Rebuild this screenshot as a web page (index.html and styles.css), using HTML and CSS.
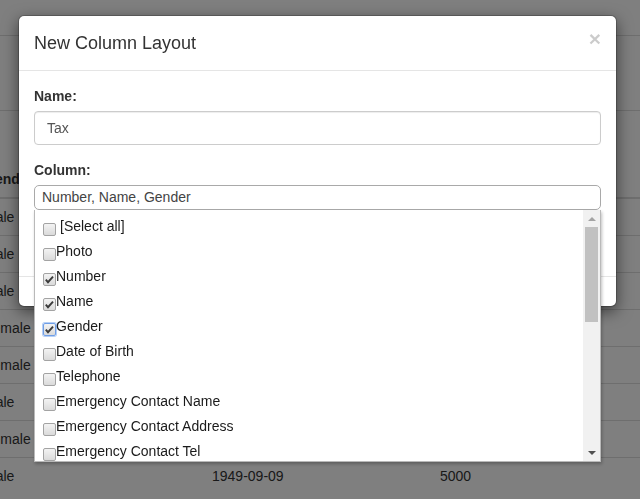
FILE: index.html
```html
<!DOCTYPE html>
<html>
<head>
<meta charset="utf-8">
<title>New Column Layout</title>
<link rel="stylesheet" href="styles.css">
</head>
<body>
<div class="page">
  <div class="topbar"></div>
  <div class="pagehead"></div>
  <div class="tbl">
    <div class="tr thead"><div class="td">Gender</div><div class="td">Date of Birth</div><div class="td">Salary</div></div>
    <div class="tr"><div class="td">Male</div><div class="td">1980-03-12</div><div class="td">4200</div></div>
    <div class="tr"><div class="td">Male</div><div class="td">1975-11-02</div><div class="td">5100</div></div>
    <div class="tr"><div class="td">Male</div><div class="td">1968-06-21</div><div class="td">3900</div></div>
    <div class="tr"><div class="td">Female</div><div class="td">1990-01-15</div><div class="td">4600</div></div>
    <div class="tr"><div class="td">Female</div><div class="td">1985-08-30</div><div class="td">4800</div></div>
    <div class="tr"><div class="td">Male</div><div class="td">1972-04-09</div><div class="td">5300</div></div>
    <div class="tr"><div class="td">Female</div><div class="td">1960-12-01</div><div class="td">4400</div></div>
    <div class="tr"><div class="td">Male</div><div class="td">1949-09-09</div><div class="td">5000</div></div>
  </div>
</div>

<div class="backdrop"></div>

<div class="modal">
  <div class="modal-header">
    <button class="close" type="button">&times;</button>
    <h4 class="modal-title">New Column Layout</h4>
  </div>
  <div class="modal-body">
    <div class="form-group">
      <label class="lbl">Name:</label>
      <input class="form-control" type="text" value="Tax">
    </div>
    <div class="form-group">
      <label class="lbl">Column:</label>
      <div class="combo">
        <span class="combo-text">Number, Name, Gender</span>
        <div class="combo-panel">
          <div class="list">
            <div class="item"><span class="cb"></span><span class="sp">[Select all]</span></div>
            <div class="item"><span class="cb"></span><span>Photo</span></div>
            <div class="item"><span class="cb"><svg viewBox="0 0 11 11" width="11" height="11"><path d="M1.8 5.6 L4 8.2 L9 2.6" fill="none" stroke="#3a3a3a" stroke-width="1.9"/></svg></span><span>Number</span></div>
            <div class="item"><span class="cb"><svg viewBox="0 0 11 11" width="11" height="11"><path d="M1.8 5.6 L4 8.2 L9 2.6" fill="none" stroke="#3a3a3a" stroke-width="1.9"/></svg></span><span>Name</span></div>
            <div class="item"><span class="cb focus"><svg viewBox="0 0 11 11" width="11" height="11"><path d="M1.8 5.6 L4 8.2 L9 2.6" fill="none" stroke="#3a3a3a" stroke-width="1.9"/></svg></span><span>Gender</span></div>
            <div class="item"><span class="cb"></span><span>Date of Birth</span></div>
            <div class="item"><span class="cb"></span><span>Telephone</span></div>
            <div class="item"><span class="cb"></span><span>Emergency Contact Name</span></div>
            <div class="item"><span class="cb"></span><span>Emergency Contact Address</span></div>
            <div class="item"><span class="cb"></span><span>Emergency Contact Tel</span></div>
            <div class="item"><span class="cb"></span><span>Department</span></div>
            <div class="item"><span class="cb"></span><span>Position</span></div>
            <div class="item"><span class="cb"></span><span>Salary</span></div>
            <div class="item"><span class="cb"></span><span>Tax</span></div>
          </div>
          <div class="sb">
            <div class="sb-btn"><span class="arr-up"></span></div>
            <div class="thumb"></div>
            <div class="sb-fill"></div>
            <div class="sb-btn"><span class="arr-down"></span></div>
          </div>
        </div>
      </div>
    </div>
  </div>
  <div class="modal-footer"></div>
</div>
</body>
</html>
```

FILE: styles.css
```css
* { box-sizing: border-box; }

html, body {
  margin: 0;
  height: 100%;
}

body {
  font-family: "Liberation Sans", Arial, sans-serif;
  font-size: 14px;
  line-height: 20px;
  color: #333;
  background: #fff;
  overflow: hidden;
  position: relative;
}

/* background page */
.topbar {
  height: 36px;
  border-bottom: 1px solid #ddd;
}

.pagehead {
  height: 75px;
  border-bottom: 1px solid #ddd;
}

.tbl {
  margin: 50px 0 0 -24px;
  width: calc(100% + 24px);
}

.tr {
  display: grid;
  grid-template-columns: 228px 228px 1fr;
  border-top: 1px solid #ddd;
}

.thead {
  font-weight: bold;
  border-top: 0;
  border-bottom: 2px solid #ddd;
}

.thead + .tr { border-top: 0; }

.td {
  padding: 8px;
  white-space: nowrap;
}

.backdrop {
  position: fixed;
  inset: 0;
  background: #000;
  opacity: .5;
  z-index: 1;
}

/* modal */
.modal {
  position: absolute;
  left: 18px;
  top: 15px;
  width: 599px;
  height: 292px;
  z-index: 2;
  display: flex;
  flex-direction: column;
  background: #fff;
  background-clip: padding-box;
  border: 1px solid rgba(0,0,0,.2);
  border-radius: 6px;
  box-shadow: 0 5px 15px rgba(0,0,0,.5);
}

.modal-header {
  height: 55px;
  padding: 15px;
  border-bottom: 1px solid #e5e5e5;
}

.modal-title {
  margin: 0;
  font-size: 18px;
  line-height: 24px;
  font-weight: normal;
  color: #333;
}

.close {
  float: right;
  margin-top: -3px;
  padding: 0;
  border: 0;
  background: none;
  font-family: inherit;
  font-size: 21px;
  font-weight: bold;
  line-height: 1;
  color: #000;
  opacity: .2;
}

.modal-body {
  position: relative;
  height: 205px;
  padding: 15px;
}

.form-group { margin-bottom: 15px; }

.lbl {
  display: block;
  margin-bottom: 5px;
  font-weight: bold;
}

.form-control {
  display: block;
  width: 100%;
  height: 34px;
  padding: 6px 12px;
  font-family: inherit;
  font-size: 14px;
  line-height: 20px;
  color: #555;
  background: #fff;
  border: 1px solid #ccc;
  border-radius: 4px;
  box-shadow: inset 0 1px 1px rgba(0,0,0,.075);
}

.modal-footer {
  flex: 1;
  border-top: 1px solid #e5e5e5;
}

/* combo */
.combo {
  position: relative;
  height: 25px;
  padding: 0 7px;
  border: 1px solid #a9a9a9;
  border-radius: 5px;
  line-height: 23px;
  color: #444;
  background: #fff;
}

.combo-panel {
  position: absolute;
  top: 24px;
  left: -1px;
  right: -1px;
  height: 252px;
  z-index: 3;
  display: flex;
  background: #fff;
  border: 1px solid #b9b9b9;
  border-top: 0;
  box-shadow: 1px 2px 3px rgba(0,0,0,.25);
}

.list {
  flex: 1;
  overflow: hidden;
  padding-top: 4px;
}

.item {
  display: flex;
  align-items: flex-start;
  height: 25px;
  padding-left: 8px;
  line-height: 25px;
  color: #1a1a1a;
  white-space: nowrap;
}

.sp { margin-left: 4px; }

.cb {
  flex: none;
  display: flex;
  align-items: center;
  justify-content: center;
  width: 13px;
  height: 13px;
  margin-top: 9px;
  border: 1px solid #a3a3a3;
  border-radius: 2px;
  background: linear-gradient(#f3f3f3, #dadada);
}

.cb.focus {
  border-color: #6f9ee6;
  box-shadow: 0 0 0 1px #b5cff5;
}

/* scrollbar */
.sb {
  flex: none;
  width: 17px;
  display: flex;
  flex-direction: column;
  align-items: center;
  background: #f1f1f1;
}

.sb-btn {
  flex: none;
  width: 17px;
  height: 17px;
  display: flex;
  align-items: center;
  justify-content: center;
}

.arr-up {
  width: 0;
  height: 0;
  border-left: 4px solid transparent;
  border-right: 4px solid transparent;
  border-bottom: 4px solid #a3a3a3;
}

.arr-down {
  width: 0;
  height: 0;
  border-left: 4px solid transparent;
  border-right: 4px solid transparent;
  border-top: 4px solid #505050;
}

.thumb {
  flex: none;
  width: 13px;
  height: 95px;
  background: #c1c1c1;
}

.sb-fill { flex: 1; }
```
